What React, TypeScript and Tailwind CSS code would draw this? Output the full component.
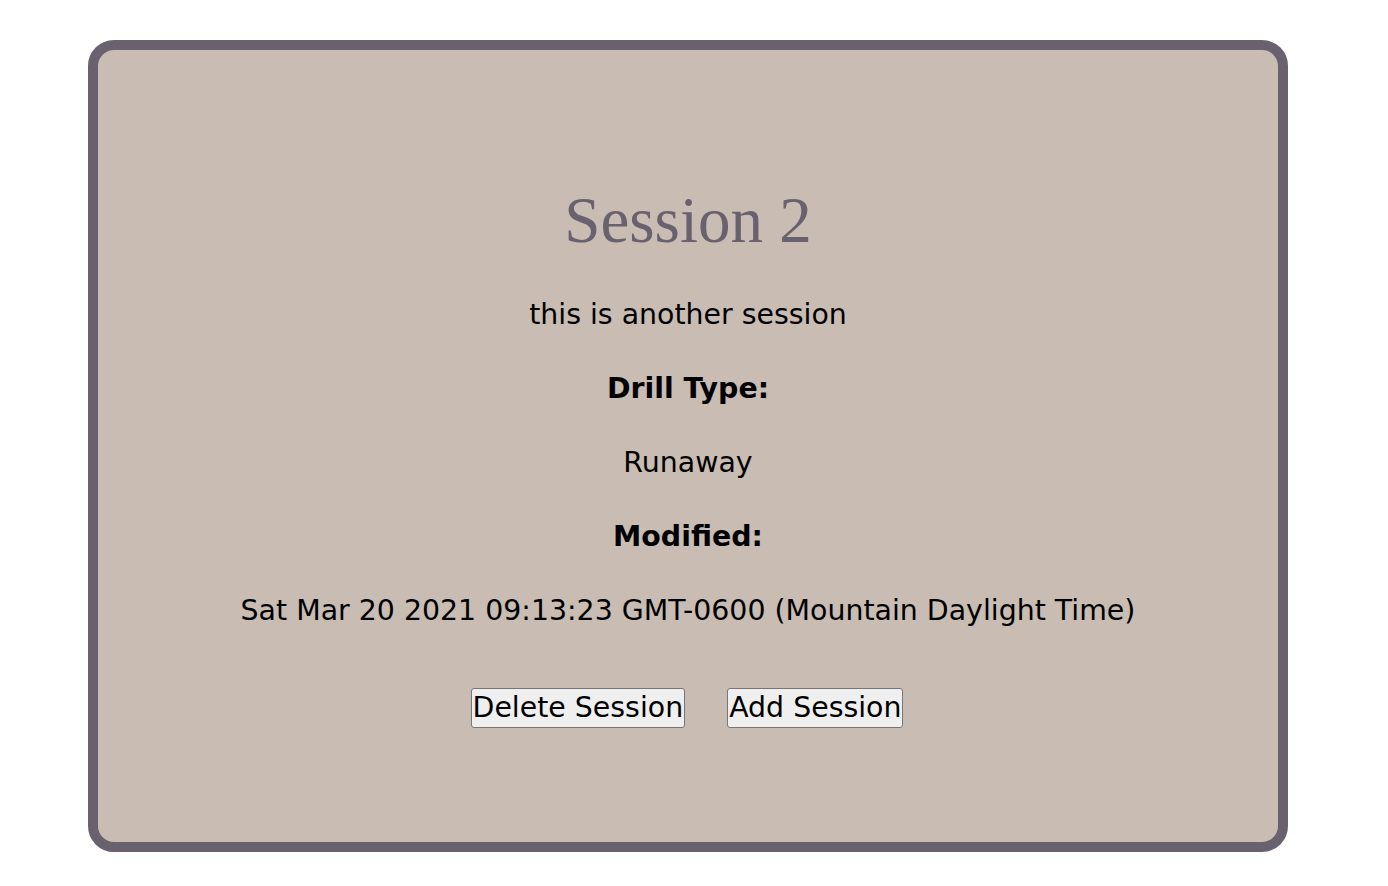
export default function App() {
  const body = "font-['DejaVu_Sans',Verdana,sans-serif] text-[28.4px] leading-[34px] text-black";
  return (
    <div className="w-[1388px] h-[886px] bg-white pt-[40px] pl-[88px]">
      <div className="w-[1200px] h-[812px] rounded-[26px] border-[10px] border-[#6a616e] bg-[#c9bcb3] flex flex-col items-center pt-[130px]">
        <h1 className="font-['Liberation_Serif',Georgia,serif] text-[65px] leading-[80px] text-[#6a616e]">Session 2</h1>
        <div className={`${body} flex flex-col items-center gap-[40px] mt-[38px]`}>
          <p>this is another session</p>
          <p className="font-bold">Drill Type:</p>
          <p>Runaway</p>
          <p className="font-bold">Modified:</p>
          <p>Sat Mar 20 2021 09:13:23 GMT-0600 (Mountain Daylight Time)</p>
        </div>
        <div className="flex gap-[42px] mt-[60px] -ml-[2px]">
          <button className={`${body} h-[40px] px-[1px] bg-[#efefef] border border-[#767676] rounded-[3px]`}>Delete Session</button>
          <button className={`${body} h-[40px] px-[1px] bg-[#efefef] border border-[#767676] rounded-[3px]`}>Add Session</button>
        </div>
      </div>
    </div>
  );
}
